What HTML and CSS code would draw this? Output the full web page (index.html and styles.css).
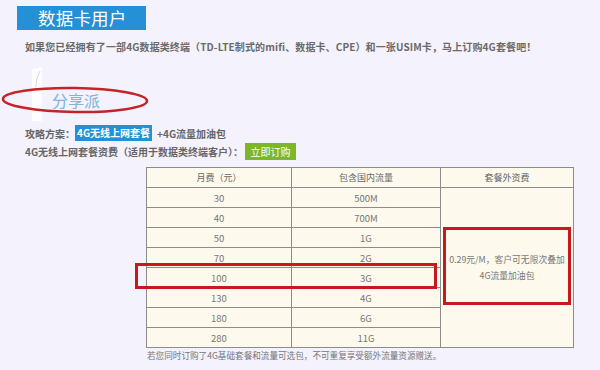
FILE: index.html
```html
<!DOCTYPE html>
<html lang="zh-CN">
<head>
<meta charset="utf-8">
<link rel="stylesheet" href="styles.css">
</head>
<body>
<div class="page">
  <div class="title">数据卡用户</div>
  <p class="intro">如果您已经拥有了一部4G数据类终端（TD-LTE制式的mifi、数据卡、CPE）和一张USIM卡，马上订购4G套餐吧！</p>
  <div class="share">
    <svg class="fold" width="14" height="54" viewBox="0 0 14 54"><path d="M2 2 L12 0 L12 54 L2 54 Z" fill="#ffffff" opacity="0.8"/><path d="M10 4 Q6 10 6 20" fill="none" stroke="#d8d6e0" stroke-width="1"/></svg>
    <span class="share-text">分享派</span>
    <svg class="ring" width="152" height="32" viewBox="0 0 152 32"><ellipse cx="75" cy="16" rx="72" ry="12" fill="none" stroke="#c3242a" stroke-width="2.6" transform="rotate(0.8 75 16)"/></svg>
  </div>
  <div class="line line-plan">攻略方案：<span class="tag">4G无线上网套餐</span>+4G流量加油包</div>
  <div class="line line-fee">4G无线上网套餐资费（适用于数据类终端客户）：<span class="btn">立即订购</span></div>
  <div class="table-wrap">
    <table class="fees">
      <colgroup><col class="c1"><col class="c2"><col class="c3"></colgroup>
      <tr><th>月费（元）</th><th>包含国内流量</th><th>套餐外资费</th></tr>
      <tr><td>30</td><td>500M</td><td rowspan="8" class="extra">0.29元/M，客户可无限次叠加<br>4G流量加油包</td></tr>
      <tr><td>40</td><td>700M</td></tr>
      <tr><td>50</td><td>1G</td></tr>
      <tr><td>70</td><td>2G</td></tr>
      <tr><td>100</td><td>3G</td></tr>
      <tr><td>130</td><td>4G</td></tr>
      <tr><td>180</td><td>6G</td></tr>
      <tr><td>280</td><td>11G</td></tr>
    </table>
    <div class="mark mark-row"></div>
    <div class="mark mark-cell"></div>
    <p class="note">若您同时订购了4G基础套餐和流量可选包，不可重复享受额外流量资源赠送。</p>
  </div>
</div>
</body>
</html>
```

FILE: styles.css
```css
html, body {
  margin: 0;
  padding: 0;
  background: #f4f2fc;
}
body {
  font-family: "Noto Sans CJK SC", "Noto Sans", sans-serif;
  color: #666;
  width: 600px;
  height: 370px;
  overflow: hidden;
}
.page {
  padding-top: 6px;
}
.title {
  margin-left: 17px;
  width: 108px;
  height: 24px;
  padding-left: 21px;
  background: #2490d6;
  color: #fff;
  font-size: 17.5px;
  line-height: 24px;
  letter-spacing: 0.2px;
}
.intro {
  margin: 10px 0 0 25px;
  font-size: 10px;
  line-height: 14px;
  font-weight: bold;
  color: #6a6a6a;
  white-space: nowrap;
  letter-spacing: 0.12px;
}
.share {
  position: relative;
  height: 71px;
}
.fold {
  position: absolute;
  left: 30px;
  top: 13px;
}
.share-text {
  position: absolute;
  left: 52px;
  top: 35px;
  font-size: 16px;
  line-height: 22px;
  color: #7fb4dc;
}
.ring {
  position: absolute;
  left: 0;
  top: 30px;
}
.line {
  margin-left: 25px;
  font-size: 10px;
  color: #666;
  font-weight: bold;
  white-space: nowrap;
  display: flex;
  align-items: center;
}
.line-plan {
  height: 16px;
}
.line-fee {
  height: 18px;
  margin-top: 1px;
}
.tag {
  background: #2490d6;
  color: #fff;
  padding: 0 2px;
  height: 16px;
  line-height: 16px;
  margin-right: 5px;
}
.btn {
  background: #7db726;
  color: #fff;
  font-weight: normal;
  height: 17px;
  line-height: 17px;
  width: 51px;
  text-align: center;
  margin-left: 2px;
}
.table-wrap {
  position: relative;
  margin: 7px 0 0 146px;
  width: 427px;
}
.fees {
  border-collapse: collapse;
  width: 427px;
  table-layout: fixed;
  background: #fdf9ec;
  font-size: 9.5px;
  color: #777;
}
.c1 { width: 145px; }
.c2 { width: 149px; }
.c3 { width: 133px; }
.fees th, .fees td {
  border: 1px solid #8c8c8c;
  height: 19px;
  padding: 0;
  text-align: center;
  line-height: 12px;
}
.fees th {
  font-weight: normal;
  color: #666;
  font-size: 9px;
}
.fees td.extra {
  font-size: 8.8px;
  line-height: 16px;
  color: #777;
}
.mark {
  position: absolute;
  border: 3px solid #c8171d;
  box-sizing: border-box;
}
.mark-row {
  left: -11px;
  top: 96px;
  width: 302px;
  height: 26px;
}
.mark-cell {
  left: 297px;
  top: 60px;
  width: 128px;
  height: 78px;
}
.note {
  margin: 1px 0 0 1px;
  font-size: 8.6px;
  line-height: 12px;
  color: #777;
  white-space: nowrap;
}
```
